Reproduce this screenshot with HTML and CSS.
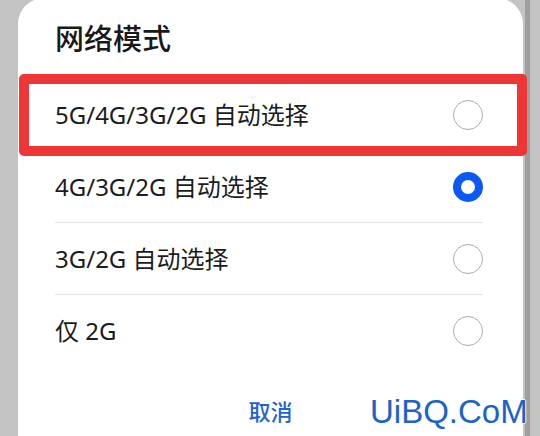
FILE: index.html
```html
<!DOCTYPE html>
<html lang="zh-CN">
<head>
<meta charset="utf-8">
<title>网络模式</title>
<link rel="stylesheet" href="styles.css">
</head>
<body>
<div class="screen">
  <div class="dialog">
    <div class="title">网络模式</div>
    <div class="options">
      <div class="option"><span class="label">5G/4G/3G/2G 自动选择</span><span class="radio"></span></div>
      <div class="option"><span class="label">4G/3G/2G 自动选择</span><span class="radio checked"></span></div>
      <div class="option"><span class="label">3G/2G 自动选择</span><span class="radio"></span></div>
      <div class="option last"><span class="label">仅 2G</span><span class="radio"></span></div>
    </div>
    <div class="actions"><span class="cancel">取消</span></div>
  </div>
  <div class="edge"></div>
  <div class="highlight"></div>
  <div class="watermark">UiBQ.CoM</div>
</div>
</body>
</html>
```

FILE: styles.css
```css
html, body {
  margin: 0;
  padding: 0;
}
body {
  background: #c3c3c3;
  font-family: "Noto Sans", "Noto Sans CJK SC", sans-serif;
  color: #1a1a1a;
}
.screen {
  position: relative;
  width: 540px;
  height: 436px;
  overflow: hidden;
  display: flex;
  align-items: flex-start;
}
.dialog {
  margin-left: 18px;
  margin-top: -2px;
  width: 505px;
  height: 460px;
  background: #ffffff;
  border-radius: 26px 26px 0 0;
  padding: 0 40px 0 37px;
  box-sizing: border-box;
  display: flex;
  flex-direction: column;
}
.title {
  padding-top: 21px;
  padding-bottom: 20px;
  height: 40px;
  line-height: 40px;
  font-size: 29px;
  font-weight: 500;
  color: #191919;
}
.options {
  display: flex;
  flex-direction: column;
}
.option {
  height: 72px;
  display: flex;
  align-items: center;
  justify-content: space-between;
  border-bottom: 1px solid #e4e4e4;
  box-sizing: border-box;
}
.option.last {
  border-bottom: none;
}
.label {
  font-size: 24px;
  line-height: 30px;
  color: #1c1c1c;
}
.radio {
  width: 30px;
  height: 30px;
  border-radius: 50%;
  border: 1.5px solid #acacac;
  box-sizing: border-box;
}
.radio.checked {
  border: 8px solid #0a59f7;
}
.actions {
  padding-top: 29px;
  display: flex;
  justify-content: center;
}
.cancel {
  font-size: 22px;
  line-height: 30px;
  font-weight: 500;
  color: #2163d2;
  margin-left: 3px;
}
.edge {
  width: 5px;
  height: 436px;
  margin-left: 2px;
  background: #9e9e9e;
}
.highlight {
  position: absolute;
  left: 19px;
  top: 74px;
  width: 508px;
  height: 82px;
  border: 10px solid #ef3636;
  border-radius: 5px;
  box-sizing: border-box;
}
.watermark {
  position: absolute;
  left: 370px;
  top: 395px;
  font-family: "Liberation Sans", Arial, sans-serif;
  font-size: 33px;
  line-height: 33px;
  color: #1b63c6;
  text-shadow: 1px 0 0 #fff, -1px 0 0 #fff, 0 1px 0 #fff, 0 -1px 0 #fff;
}
```
